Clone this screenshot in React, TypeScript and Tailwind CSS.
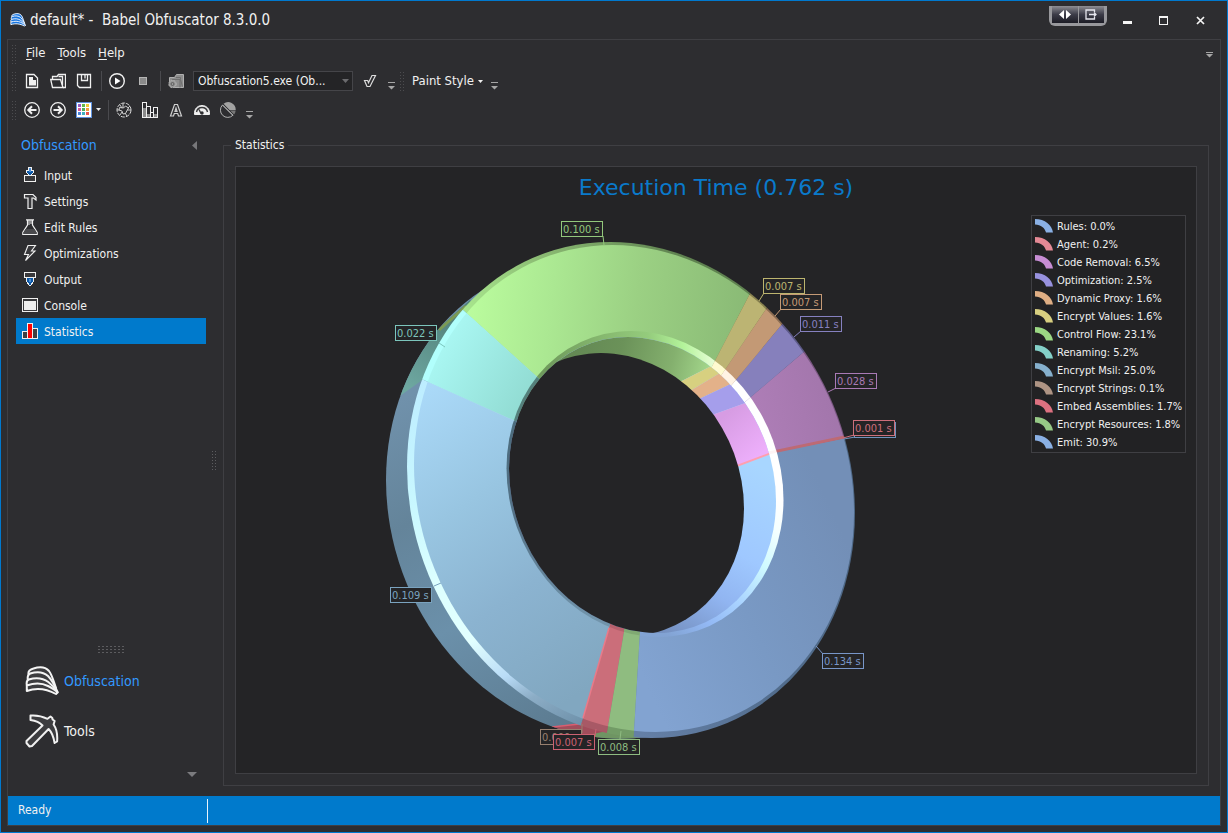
import type { ReactNode } from "react";

type Point = [number, number];

const poly = (points: Point[]) => points.map((p) => p.join(",")).join(" ");

/* ---------- toolbar and navigation icons ---------- */

function Icon({ size = 16, crisp = false, children }: { size?: number; crisp?: boolean; children: ReactNode }) {
  return (
    <svg
      width={size}
      height={size}
      viewBox={`0 0 ${size} ${size}`}
      fill="none"
      stroke="#f0f0f0"
      shapeRendering={crisp ? "crispEdges" : "auto"}
      aria-hidden="true"
      className="shrink-0"
    >
      {children}
    </svg>
  );
}

const NewIcon = () => (
  <Icon>
    <path d="M2.500 1.500h7.500l3.500 3.500v9.500h-11z" strokeWidth="1.300" />
    <path d="M5 4h4v3h3v5.500H5z" fill="#f0f0f0" stroke="none" />
  </Icon>
);
const OpenIcon = () => (
  <Icon>
    <path d="M.7 6.500h9.800l2.500 8H2.500z" fill="#2d2d30" strokeWidth="1.300" />
    <path d="M2.500 6V3.500H7l1.500-2h7v13h-2.500" strokeWidth="1.300" />
    <path d="M8.500 3.500h4V12" strokeWidth="1.300" />
  </Icon>
);
const SaveIcon = () => (
  <Icon>
    <path d="M1.500 1.500h13v13h-11l-2-2z" strokeWidth="1.300" />
    <path d="M5.500 2v5.500h6V2M9 2v3.500" strokeWidth="1.300" />
  </Icon>
);
const PlayIcon = () => (
  <Icon>
    <circle cx="8" cy="8" r="7.300" strokeWidth="1.400" />
    <path d="M6 4.500v7L11.500 8z" fill="#fff" stroke="none" />
  </Icon>
);
const StopIcon = () => (
  <Icon crisp>
    <path d="M4 4h8v8H4z" fill="#b5b5b5" stroke="none" />
    <path d="M5 5h6v6H5z" fill="#8a8a8a" stroke="none" />
  </Icon>
);
const BuildIcon = () => (
  <Icon>
    <path d="M1.500 4.500h5l2-3h7v13h-9l-5-5z" fill="#8d8d8d" stroke="#b0b0b0" />
    <path d="M4 6.500h8v8M8 4.500h4.500v2l2 7" stroke="#6f6f6f" />
    <circle cx="4.500" cy="11" r="3.700" fill="#9a9a9a" stroke="#b4b4b4" strokeDasharray="2 1" />
    <circle cx="4.500" cy="11" r="1.500" stroke="#5c5c5c" />
  </Icon>
);
const CheckIcon = () => (
  <Icon>
    <path d="M2.500 7.500h3.200l.8 2.300 3.500-7.300h3.500l-5.500 11h-3z" stroke="#dcdcdc" strokeWidth="1.200" />
  </Icon>
);
const ArrowIcon = ({ back = false }: { back?: boolean }) => (
  <Icon>
    <circle cx="8" cy="8" r="7.300" strokeWidth="1.300" />
    {back ? (
      <path d="M12.500 8H4.500M8 4.300L4.300 8 8 11.700" strokeWidth="2" />
    ) : (
      <path d="M3.500 8h8M8 4.300L11.700 8 8 11.700" strokeWidth="2" />
    )}
  </Icon>
);
const paletteCells = ["#9a5cc0", "#62b94c", "#efc935", "#d65a9a", "#4db05b", "#efa03c", "#4a84d8", "#3fb0c0", "#e8554e"];
const PaletteIcon = () => (
  <Icon crisp>
    <path d="M.5.500h15v15H.500z" fill="#fff" stroke="#5f92e0" />
    {paletteCells.map((color, i) => (
      <rect key={i} x={2 + (i % 3) * 4} y={2 + Math.floor(i / 3) * 4} width="3" height="3" fill={color} stroke="none" />
    ))}
  </Icon>
);
const GlobeIcon = () => (
  <Icon>
    <circle cx="8" cy="8" r="7" strokeDasharray="4 1" stroke="#d8d8d8" />
    <path d="M3.500 5.500l4 .5L9.500 4l3 2-1.500 2.500-1.500 3L7 12l-1-3-3-1zM1 8h2.500M12 6l2-2M9 11l2 3M7 1v5M11 8h4M6 10l-2 3M4 3l2 3" stroke="#cdcdcd" />
  </Icon>
);
const BarsIcon = () => (
  <Icon crisp>
    <path d="M.5 15.500V.500h4v15M4.500 15.500v-11h4v11M8.500 15.500v-5h3v5M11.500 15.500v-10h4v10M0 15.500h16" />
    <path d="M1 6h3v9H1zM12 12h3v3h-3zM5 12h3v3H5z" fill="#8b8b8b" stroke="none" />
  </Icon>
);
const LetterIcon = () => (
  <Icon>
    <path d="M2.500 14L6.500 2.500h3L13.500 14h-3l-.8-2.500H6.300L5.500 14zM7 9.300h2L8 6z" stroke="#d0d0d0" strokeWidth="1.200" />
  </Icon>
);
const GaugeIcon = () => (
  <Icon>
    <path d="M.5 12.500C0 7 3.500 3.500 8 3.500s8 3.500 7.500 9z" fill="#f0f0f0" />
    <path d="M2.500 10c.6-3 3-4.500 5.500-4.500s4.900 1.500 5.500 4.500M7 11.500l-2-4" stroke="#38383a" strokeWidth="1.400" />
    <circle cx="8" cy="11" r="1.700" fill="#2d2d30" stroke="none" />
  </Icon>
);
const PieIcon = () => (
  <Icon>
    <path d="M2.500 3a7.200 7.200 0 0 0 10.500 10.200z" stroke="#b0b0b0" />
    <path d="M3.500 1.800A7.500 7.500 0 0 1 15.700 8H9.500z" fill="#a2a2a2" stroke="none" />
    <path d="M10 8.500h5.700a7.500 7.500 0 0 1-1.700 4z" fill="#777" stroke="none" />
    <path d="M2.500 3l10.500 10.500" stroke="#b0b0b0" />
  </Icon>
);

const InputIcon = () => (
  <Icon crisp>
    <path d="M6.500.500h3v3h2v2l-3 3h-1l-3-3v-2h2z" fill="#0b58a8" />
    <path d="M7 1h2v4H7z" fill="#4d8fd6" stroke="none" />
    <path d="M2.500 8.500h11v6h-11z" fill="#39393c" />
  </Icon>
);
const SettingsIcon = () => (
  <Icon>
    <path d="M2.500 1.500H11l3 3v2.500l-2.500-2H10v10.500H6V5H2.500z" fill="#39393c" strokeWidth="1.200" />
  </Icon>
);
const RulesIcon = () => (
  <Icon>
    <path d="M4 .8h8M5.500 1v5L.8 13.500v2h14.400v-2L10.500 6V1" fill="#2d2d30" strokeWidth="1.200" />
    <path d="M3.500 10h9l2 3.500v1.500h-13v-1.500z" fill="#4a4a4d" stroke="none" />
    <path d="M7 1v5M9 1v4" />
  </Icon>
);
const BoltIcon = () => (
  <Icon>
    <path d="M6 .5h7.500L9.500 6h3.500L3.500 15.500 6.500 9.500H2.500z" fill="#39393c" strokeWidth="1.100" />
  </Icon>
);
const OutputIcon = () => (
  <Icon crisp>
    <path d="M4.500 6.500h7v4l-3 4h-1l-3-4z" fill="#0b58a8" />
    <path d="M2.500 1.500h11v5h-11z" fill="#39393c" />
    <path d="M7 8h2v3H7z" fill="#4d8fd6" stroke="none" />
  </Icon>
);
const ConsoleIcon = () => (
  <Icon crisp>
    <path d="M.5 1.500h15v13H.500z" fill="#39393c" />
    <path d="M2 4h12v9H2z" fill="#f0f0f0" stroke="none" />
  </Icon>
);
const StatisticsIcon = () => (
  <Icon crisp>
    <path d="M.5 8.500h5v7h-5zM10.500 5.500h5v10h-5z" fill="#404043" />
    <path d="M5.500.500h5v15h-5z" fill="#ff0000" />
  </Icon>
);

const ShellShape = ({ stroke, fill, width }: { stroke: string; fill: string; width: number }) => (
  <g stroke={stroke} fill={fill} strokeWidth={width} strokeLinejoin="round">
    <path d="M3.500 10C3 7.500 5 5.500 8.500 4.500c6-2 12-1.500 15.500 2.500 3.500 4.500 5 12 7 17l-6-7z" />
    <path d="M2.700 15.500c-.3-3 .3-5 2.500-6 6-2 13-1.800 17.800 2.500C27 16 30 22 32.500 28l-8-6z" />
    <path d="M1.800 21c-.5-3 0-4.800 2-5.500 7-2 14-1.500 19.500 2.500 4 3 7 6.500 9.200 10.300l-6-2z" />
    <path d="M1.800 27V21.500C9 19 17 19 23 22c4 2 7.500 4 9.500 6.500L31 30C22 25 11 23.500 1.800 27z" />
  </g>
);
const PickShape = () => (
  <path
    d="M5.500 1.500c6-.5 11 .3 17 3.300l3-2.300 1.800 1.500.3 1.500 2 1.500-1 3.500c3.500 5 4 11 3.500 17l-2.500 1.500c-1-6-3-11-6-14L7 32l-2.500.5L1.500 29v-2L17.500 11.500C14.500 8 10 6.500 5.500 6z"
    fill="#3c3c3f"
    strokeWidth="2"
    strokeLinejoin="round"
  />
);

/* ---------- small chrome pieces ---------- */

const Caret = ({ color = "#f0f0f0" }: { color?: string }) => (
  <svg width="5" height="3" viewBox="0 0 5 3" aria-hidden="true" className="shrink-0">
    <path d="M0 0h5L2.500 3z" fill={color} />
  </svg>
);
const Grip = () => (
  <span className="h-5 w-[5px] shrink-0 bg-[radial-gradient(#4c4c4f_0.6px,transparent_1px)] bg-[length:3px_3px]" />
);
const Separator = () => <span className="mr-0.5 ml-1 h-5 w-px shrink-0 bg-[#4a4a4e]" />;
const Overflow = () => (
  <button type="button" aria-label="More buttons" className="flex h-[26px] w-4 items-end justify-center pb-1">
    <svg width="9" height="9" viewBox="0 0 9 9" aria-hidden="true">
      <path d="M1 1h7v1H1zM1 5h7L4.500 8.500z" fill="#a6a6a6" />
    </svg>
  </button>
);
const ToolButton = ({ label, children }: { label: string; children: ReactNode }) => (
  <button type="button" aria-label={label} className="flex size-[26px] shrink-0 items-center justify-center hover:bg-white/10">
    {children}
  </button>
);

/* ---------- chart ---------- */

/* Affine maps that turn the unit circle into each edge of the tilted ring. */
const edges = {
  back: "matrix(218 19 0 239 604 499)",
  rim: "matrix(224 23 0 247 631 490)",
  face: "matrix(220 24 0 242.300 634 488.500)",
  inner: "matrix(138.500 15.700 0 152.200 645 484)",
  innerWall: "matrix(133.500 16 0 147.100 642.500 485)",
  hole: "matrix(130 14 0 140.800 614 494.500)",
};

const slices: Record<string, Point[]> = {
  control: [[545, 384], [420, 271], [420, 200], [790, 200], [768, 259], [706, 378]],
  renaming: [[545, 384], [420, 271], [350, 271], [361, 352], [522, 424]],
  msil: [[522, 424], [361, 352], [330, 780], [571, 780], [571, 760], [612, 618]],
  embed: [[612, 618], [571, 760], [602, 762], [626, 620]],
  resources: [[626, 620], [602, 762], [632, 765], [641, 615]],
  emit: [[641, 615], [632, 765], [910, 780], [890, 429], [756, 456]],
  agent: [[756, 457], [890, 429], [890, 426], [756, 454]],
  removal: [[756, 455], [890, 427], [880, 322], [839, 322], [738, 408]],
  optimization: [[738, 408], [839, 322], [807, 294], [725, 393]],
  proxy: [[725, 393], [807, 294], [787, 278], [714, 386]],
  values: [[714, 386], [787, 278], [768, 259], [706, 378]],
};

function Slices({ colors, prefix }: { colors: Record<string, string>; prefix: string }) {
  return (
    <g>
      {Object.entries(colors).map(([name, color]) => (
        <polygon key={prefix + name} points={poly(slices[name])} fill={color} />
      ))}
    </g>
  );
}

type Stop = [number, string];
function Gradient({ id, from, to, stops }: { id: string; from: Point; to: Point; stops: Stop[] }) {
  return (
    <linearGradient id={id} gradientUnits="userSpaceOnUse" x1={from[0]} y1={from[1]} x2={to[0]} y2={to[1]}>
      {stops.map(([offset, color]) => (
        <stop key={offset} offset={offset} stopColor={color} />
      ))}
    </linearGradient>
  );
}

type Label = { x: number; y: number; text: string; color: string; line: [number, number, number, number] };
const labels: Label[] = [
  { x: 561, y: 221, text: "0.100 s", color: "#93c87c", line: [603, 236, 604, 245] },
  { x: 763, y: 278, text: "0.007 s", color: "#bdb56f", line: [759, 301, 764, 293] },
  { x: 780, y: 294, text: "0.007 s", color: "#c49a76", line: [775, 316, 781, 309] },
  { x: 800, y: 316, text: "0.011 s", color: "#8681c0", line: [794, 337, 801, 331] },
  { x: 835, y: 373, text: "0.028 s", color: "#a97ab5", line: [828, 392, 836, 388] },
  { x: 854, y: 422, text: "", color: "#6f93bd", line: [844, 439, 855, 437] },
  { x: 853, y: 420, text: "0.001 s", color: "#cc6f7b", line: [843, 438, 854, 435] },
  { x: 822, y: 653, text: "0.134 s", color: "#7896c8", line: [816, 646, 823, 654] },
  { x: 598, y: 739, text: "0.008 s", color: "#8fbc81", line: [621, 731, 620, 739] },
  { x: 540, y: 729, text: "0.000 s", color: "#98806f", line: [582, 724, 582, 733] },
  { x: 553, y: 734, text: "0.007 s", color: "#cc6272", line: [596, 729, 595, 736] },
  { x: 390, y: 587, text: "0.109 s", color: "#7aa3bf", line: [434, 586, 441, 583] },
  { x: 395, y: 325, text: "0.022 s", color: "#7cc5bc", line: [439, 343, 445, 347] },
];

function RingChart() {
  return (
    <svg width="524" height="550" viewBox="372 215 524 550" role="img" aria-label="Execution time by phase" className="shrink-0">
      <defs>
        {Object.entries(edges).map(([name, matrix]) => (
          <clipPath key={name} id={`clip-${name}`}>
            <circle r="1" transform={matrix} />
          </clipPath>
        ))}
        <Gradient id="face-control" from={[465, 300]} to={[750, 330]} stops={[[0, "#bbfd9e"], [0.3, "#abe892"], [0.6, "#9bd083"], [1, "#89b975"]]} />
        <Gradient id="face-renaming" from={[430, 340]} to={[530, 400]} stops={[[0, "#acfaf6"], [1, "#91dbd2"]]} />
        <Gradient id="face-msil" from={[410, 400]} to={[600, 680]} stops={[[0, "#aad9f8"], [0.35, "#98c5e1"], [0.65, "#8bb3d0"], [1, "#81a7c0"]]} />
        <Gradient id="face-emit" from={[635, 660]} to={[855, 560]} stops={[[0, "#82a3d1"], [0.5, "#7999c4"], [1, "#738fb7"]]} />
        <Gradient id="face-removal" from={[760, 420]} to={[845, 400]} stops={[[0, "#ad7db6"], [1, "#a175aa"]]} />
        <Gradient id="rim-control" from={[462, 310]} to={[680, 250]} stops={[[0, "#a9e78e"], [0.4, "#8bbb73"], [1, "#5f8250"]]} />
        <Gradient id="rim-msil" from={[410, 380]} to={[580, 725]} stops={[[0, "#bcecff"], [0.3, "#c9f8ff"], [0.5, "#dcffff"], [0.68, "#e2ffff"], [0.8, "#b9dcf7"], [0.88, "#8cadc6"], [1, "#6e91aa"]]} />
        <Gradient id="rim-emit" from={[640, 730]} to={[855, 580]} stops={[[0, "#647fa6"], [0.5, "#526d8d"], [1, "#4d6785"]]} />
        <Gradient id="wall-msil" from={[400, 400]} to={[580, 730]} stops={[[0, "#7091ab"], [0.3, "#64849a"], [0.6, "#6b90aa"], [1, "#5b7a8f"]]} />
        <Gradient id="wall-renaming" from={[410, 390]} to={[460, 320]} stops={[[0, "#6ea8a1"], [1, "#52817b"]]} />
        <Gradient id="bevel-control" from={[545, 360]} to={[718, 350]} stops={[[0, "#6f9a5c"], [0.3, "#84b56d"], [0.6, "#94cb7c"], [0.8, "#b3f39a"], [1, "#efffdf"]]} />
        <Gradient id="bevel-msil" from={[510, 430]} to={[590, 620]} stops={[[0, "#4c6c7d"], [0.4, "#557388"], [1, "#7194ab"]]} />
        <Gradient id="bevel-emit" from={[780, 500]} to={[670, 637]} stops={[[0, "#ffffff"], [0.15, "#f4ffff"], [0.35, "#cffaff"], [0.6, "#a9d3ff"], [0.8, "#93b9f5"], [1, "#82a3d3"]]} />
        <Gradient id="inside-control" from={[560, 350]} to={[705, 385]} stops={[[0, "#628653"], [0.4, "#6b9259"], [0.75, "#84b06e"], [1, "#a3d68b"]]} />
        <Gradient id="inside-emit" from={[765, 470]} to={[670, 635]} stops={[[0, "#a8d6ff"], [0.45, "#9fc8ff"], [0.7, "#91b5f1"], [1, "#7591c1"]]} />
        <Gradient id="inside-removal" from={[725, 415]} to={[760, 455]} stops={[[0, "#d79ce3"], [1, "#edaffb"]]} />
      </defs>

      <g clipPath="url(#clip-back)">
        <rect x="372" y="215" width="524" height="550" fill="url(#wall-msil)" />
        <polygon points="432,373 386,406 370,320 437,330 441,326 470,300 490,320" fill="url(#wall-renaming)" />
        <path d="M439 330L466 306" stroke="#7c9a54" strokeWidth="3" />
        <polygon points="590,721 550,728 545,745 592,742 612,728" fill="#a14d5b" />
        <polygon points="612,730 588,735 585,745 640,745 640,730" fill="#6f9563" />
        <path d="M552 727L584 723.500" stroke="#d95f70" strokeWidth="1.500" />
      </g>
      <g clipPath="url(#clip-rim)">
        <Slices
          prefix="rim"
          colors={{
            control: "url(#rim-control)",
            renaming: "#b1fffc",
            msil: "url(#rim-msil)",
            embed: "#a85966",
            resources: "#729b66",
            emit: "url(#rim-emit)",
            removal: "#795781",
            agent: "#a65a63",
            optimization: "#5d5a88",
            proxy: "#8b6c52",
            values: "#87814f",
          }}
        />
      </g>
      <g clipPath="url(#clip-face)">
        <Slices
          prefix="face"
          colors={{
            control: "url(#face-control)",
            renaming: "url(#face-renaming)",
            msil: "url(#face-msil)",
            embed: "#cb6e7a",
            resources: "#8fbc80",
            emit: "url(#face-emit)",
            removal: "url(#face-removal)",
            agent: "#bd6a74",
            optimization: "#8680bc",
            proxy: "#c39975",
            values: "#bcb473",
          }}
        />
        <path d="M609 628L583 718" stroke="#e97a89" strokeWidth="1.500" />
      </g>
      <g clipPath="url(#clip-inner)">
        <Slices
          prefix="bevel"
          colors={{
            control: "url(#bevel-control)",
            renaming: "#54807b",
            msil: "url(#bevel-msil)",
            embed: "#b6606c",
            resources: "#80aa73",
            emit: "url(#bevel-emit)",
            removal: "#ffffff",
            agent: "#fff4f4",
            optimization: "#ffffff",
            proxy: "#fff3e4",
            values: "#fffbd0",
          }}
        />
      </g>
      <g clipPath="url(#clip-innerWall)">
        <rect x="480" y="320" width="320" height="330" fill="url(#inside-emit)" />
        <polygon points="500,300 735,300 735,354 660,392 500,420" fill="url(#inside-control)" />
        <polygon points="735,354 660,392 670,403 740,361" fill="#d7d080" />
        <polygon points="740,361 670,403 680,408 752,374" fill="#e3b189" />
        <polygon points="752,374 680,408 690,423 770,394" fill="#a59eeb" />
        <polygon points="770,394 690,423 710,476 790,446" fill="url(#inside-removal)" />
        <path d="M790 446L710 476" stroke="#ff9fae" strokeWidth="2" />
        <circle r="1" transform={edges.hole} fill="#242426" />
      </g>

      {labels.map(({ x, y, text, color, line }) => (
        <g key={`${x}-${y}`}>
          <line x1={line[0]} y1={line[1]} x2={line[2]} y2={line[3]} stroke={color} />
          <rect x={x + 0.5} y={y + 0.5} width="41" height="15" fill="#242426" stroke={color} shapeRendering="crispEdges" />
          <text x={x + 2} y={y + 12} fill={color} className="text-[11px]">
            {text}
          </text>
        </g>
      ))}
    </svg>
  );
}

const legend = [
  { name: "Rules: 0.0%", color: "#8ab0e4" },
  { name: "Agent: 0.2%", color: "#e48995" },
  { name: "Code Removal: 6.5%", color: "#c78dd4" },
  { name: "Optimization: 2.5%", color: "#9791de" },
  { name: "Dynamic Proxy: 1.6%", color: "#dfae84" },
  { name: "Encrypt Values: 1.6%", color: "#d8cf80" },
  { name: "Control Flow: 23.1%", color: "#9bd883" },
  { name: "Renaming: 5.2%", color: "#84d0c8" },
  { name: "Encrypt Msil: 25.0%", color: "#86b0cd" },
  { name: "Encrypt Strings: 0.1%", color: "#ae9484" },
  { name: "Embed Assemblies: 1.7%", color: "#dd7180" },
  { name: "Encrypt Resources: 1.8%", color: "#96c986" },
  { name: "Emit: 30.9%", color: "#8ab0e4" },
];

const navItems = [
  { label: "Input", icon: <InputIcon /> },
  { label: "Settings", icon: <SettingsIcon /> },
  { label: "Edit Rules", icon: <RulesIcon /> },
  { label: "Optimizations", icon: <BoltIcon /> },
  { label: "Output", icon: <OutputIcon /> },
  { label: "Console", icon: <ConsoleIcon /> },
  { label: "Statistics", icon: <StatisticsIcon /> },
];

const menus = [
  ["F", "ile"],
  ["T", "ools"],
  ["H", "elp"],
];

export default function App() {
  return (
    <div className="flex min-h-screen flex-col border border-[#0079cf] bg-[#2d2d30] font-['DejaVu_Sans_Condensed','DejaVu_Sans',sans-serif] text-[12px] text-[#f1f1f1]">
      <header className="flex h-[38px] shrink-0 items-center pl-[9px]">
        <svg width="16" height="16" viewBox="0 0 34 34" aria-hidden="true">
          <ShellShape stroke="#f2f8ff" fill="#1976e0" width={2} />
        </svg>
        <h1 className="ml-1 flex-1 text-[15px] whitespace-pre">{"default* -  Babel Obfuscator 8.3.0.0"}</h1>
        <div className="mb-2 flex h-5 w-[58px] gap-px rounded-b-md border-2 border-t-0 border-[#98989c] bg-[#98989c] p-px pt-0">
          <button type="button" aria-label="Split view" className="flex flex-1 items-center justify-center bg-linear-to-b from-[#8e8e94] via-[#3c3c48] to-[#1d1d26]">
            <svg width="12" height="9" viewBox="0 0 12 9" aria-hidden="true">
              <path d="M5 0v9L0 4.500zM7 0v9l5-4.500z" fill="#fff" />
            </svg>
          </button>
          <button type="button" aria-label="Exit view" className="flex flex-1 items-center justify-center bg-linear-to-b from-[#8e8e94] via-[#3c3c48] to-[#1d1d26]">
            <svg width="12" height="11" viewBox="0 0 12 11" fill="none" stroke="#e6e6ee" aria-hidden="true">
              <path d="M9.500 3V1H1v9h8.500V8M4 5.500h7M9 3.500l2 2-2 2" strokeWidth="1.300" />
            </svg>
          </button>
        </div>
        <button type="button" aria-label="Minimize" className="flex h-[38px] w-10 items-center justify-center">
          <span className="mt-1 h-[3px] w-[9px] bg-[#f4f4f4]" />
        </button>
        <button type="button" aria-label="Maximize" className="flex h-[38px] w-8 items-center justify-center">
          <span className="size-[9px] border border-t-2 border-[#f4f4f4]" />
        </button>
        <button type="button" aria-label="Close" className="mr-1.5 flex h-[38px] w-[42px] items-center justify-center">
          <svg width="9" height="9" viewBox="0 0 9 9" stroke="#f4f4f4" strokeWidth="1.700" aria-hidden="true">
            <path d="M1 1l7 7M8 1L1 8" />
          </svg>
        </button>
      </header>

      <div className="mx-1.5 mb-1.5 flex flex-1 flex-col border border-[#3f3f43]">
        <div className="flex h-[27px] shrink-0 items-start pl-[3px]">
          <span className="mt-1 flex">
            <Grip />
          </span>
          <nav aria-label="Main menu" className="flex flex-1 gap-3 pl-2.5 text-[13px] leading-[26px]">
            {menus.map(([first, rest]) => (
              <button key={first} type="button">
                <span className="underline underline-offset-2">{first}</span>
                {rest}
              </button>
            ))}
          </nav>
          <button type="button" aria-label="Menu options" className="flex h-[26px] w-[15px] items-center pt-0.5">
            <svg width="9" height="9" viewBox="0 0 9 9" aria-hidden="true">
              <path d="M1 2h7v1H1zM1 4h7L4.500 7.500z" fill="#a6a6a6" />
            </svg>
          </button>
        </div>

        <div className="flex h-7 shrink-0 items-center pl-[3px]">
          <Grip />
          <span className="w-[3px]" />
          <ToolButton label="New"><NewIcon /></ToolButton>
          <ToolButton label="Open"><OpenIcon /></ToolButton>
          <ToolButton label="Save"><SaveIcon /></ToolButton>
          <Separator />
          <ToolButton label="Run"><PlayIcon /></ToolButton>
          <ToolButton label="Stop"><StopIcon /></ToolButton>
          <Separator />
          <ToolButton label="Build"><BuildIcon /></ToolButton>
          <div className="relative mx-1 w-40">
            <select aria-label="Target assembly" className="h-5 w-full appearance-none border border-[#454549] bg-[#242426] pl-1 text-[12px]">
              <option>Obfuscation5.exe (Ob...</option>
            </select>
            <span className="pointer-events-none absolute top-2 right-1">
              <svg width="7" height="4" viewBox="0 0 7 4" aria-hidden="true">
                <path d="M0 0h7L3.500 4z" fill="#6b6b6e" />
              </svg>
            </span>
          </div>
          <ToolButton label="Validate"><CheckIcon /></ToolButton>
          <Overflow />
          <Grip />
          <button type="button" className="ml-2 flex h-[26px] items-center gap-1 text-[13px]">
            Paint Style
            <Caret />
          </button>
          <span className="w-1" />
          <Overflow />
        </div>

        <div className="flex h-[29px] shrink-0 items-center pl-[3px]">
          <Grip />
          <span className="w-[3px]" />
          <ToolButton label="Back"><ArrowIcon back /></ToolButton>
          <ToolButton label="Forward"><ArrowIcon /></ToolButton>
          <button type="button" aria-label="Colors" className="mr-[3px] flex h-[26px] items-center gap-1 pl-[5px]">
            <PaletteIcon />
            <Caret />
          </button>
          <Separator />
          <ToolButton label="Network"><GlobeIcon /></ToolButton>
          <ToolButton label="Bars"><BarsIcon /></ToolButton>
          <ToolButton label="Text"><LetterIcon /></ToolButton>
          <ToolButton label="Performance"><GaugeIcon /></ToolButton>
          <ToolButton label="Pie"><PieIcon /></ToolButton>
          <Overflow />
        </div>

        <main className="flex flex-1">
          <aside className="ml-1.5 flex w-[194px] shrink-0 flex-col pt-1.5">
            <div className="flex h-8 items-center justify-between pr-[11px] pb-0.5 pl-[7px]">
              <h2 className="text-[14px] text-[#3399ff]">Obfuscation</h2>
              <button type="button" aria-label="Collapse">
                <svg width="5" height="9" viewBox="0 0 5 9" aria-hidden="true">
                  <path d="M5 0v9L0 4.500z" fill="#77777a" />
                </svg>
              </button>
            </div>
            <ul className="px-0.5">
              {navItems.map(({ label, icon }) => (
                <li key={label}>
                  <a
                    href={`#${label}`}
                    aria-current={label === "Statistics" ? "page" : undefined}
                    className="flex h-[26px] items-center gap-1.5 pl-1.5 aria-[current=page]:bg-[#007acc]"
                  >
                    {icon}
                    <span className="pt-0.5">{label}</span>
                  </a>
                </li>
              ))}
            </ul>
            <span className="mx-auto mt-auto h-2 w-7 bg-[radial-gradient(#5c5c5f_0.6px,transparent_1px)] bg-[length:4px_3px]" />
            <a href="#obfuscation" className="mt-[3px] flex h-[50px] items-center gap-[5px] pl-[11px] text-[14px] text-[#3399ff]">
              <Icon size={34}><ShellShape stroke="#f4f4f4" fill="#3c3c3f" width={2} /></Icon>
              Obfuscation
            </a>
            <a href="#tools" className="flex h-[50px] items-center gap-[5px] pl-[11px] text-[14px]">
              <Icon size={34}><PickShape /></Icon>
              Tools
            </a>
            <button type="button" aria-label="More groups" className="mb-[19px] flex h-[21px] items-end justify-end pr-[11px]">
              <svg width="10" height="5" viewBox="0 0 10 5" aria-hidden="true">
                <path d="M0 0h10L5 5z" fill="#7b7b7e" />
              </svg>
            </button>
          </aside>

          <div className="flex w-[15px] shrink-0 items-center pl-[3px]">
            <span className="h-5 w-[5px] bg-[radial-gradient(#5c5c5f_0.6px,transparent_1px)] bg-[length:3px_3px]" />
          </div>

          <fieldset className="mt-[11px] mr-[11px] mb-2.5 flex min-w-0 flex-1 flex-col border border-[#3f3f43] p-[11px]">
            <legend className="-ml-1 h-5 px-1 text-[12px] leading-5">Statistics</legend>
            <section className="flex flex-1 flex-col border border-[#3f3f43] bg-[#242426]">
              <h3 className="h-12 pt-[5px] text-center font-['DejaVu_Sans',sans-serif] text-[22px] leading-8 text-[#0a7acb]">
                Execution Time (0.762 s)
              </h3>
              <div className="flex">
                <div className="flex flex-1 justify-center">
                  <RingChart />
                </div>
                <ul className="mr-2.5 flex w-[155px] flex-col self-start border border-[#3f3f43] bg-[#222224] py-px text-[11px]">
                  {legend.map(({ name, color }) => (
                    <li key={name} className="flex h-[18px] items-center gap-1 pl-[3px] leading-[18px] whitespace-nowrap">
                      <svg width="18" height="14" viewBox="0 0 18 14" aria-hidden="true" className="shrink-0">
                        <path d="M0 0C10 0 17 6 18 13.500h-7C10 9 6 6 0 5.500z" fill={color} />
                      </svg>
                      <span className="pt-0.5">{name}</span>
                    </li>
                  ))}
                </ul>
              </div>
            </section>
          </fieldset>
        </main>

        <footer className="flex h-[29px] shrink-0 items-center bg-[#007acc] text-[12px]">
          <span className="w-[199px] pb-0.5 pl-2.5">Ready</span>
          <span className="h-6 w-px bg-[#e8f4fc]" />
        </footer>
      </div>
    </div>
  );
}
